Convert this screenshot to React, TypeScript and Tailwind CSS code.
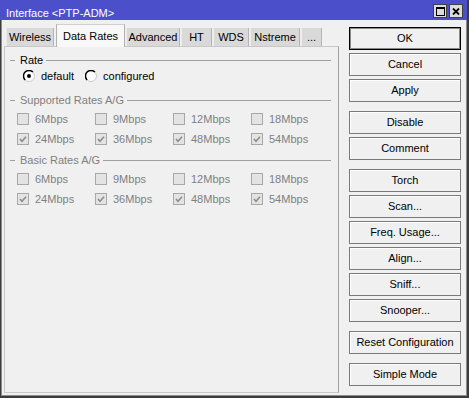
import React from "react"

// ***** INTERFACE WINDOW (DATA RATES TAB) *****

const tabs = [
    { name: "Wireless", w: "w-[48px]", ml: "ml-[2px]" },
    { name: "Data Rates", w: "w-[69px]", ml: "ml-[2px]", active: true },
    { name: "Advanced", w: "w-[54px]", ml: "ml-[1px]" },
    { name: "HT", w: "w-[31px]", ml: "ml-[1px]" },
    { name: "WDS", w: "w-[36px]", ml: "ml-[1px]" },
    { name: "Nstreme", w: "w-[50px]", ml: "ml-[1px]" },
    { name: "...", w: "w-[21px]", ml: "ml-[1px]" },
]

const rows = [
    [{ label: "6Mbps" }, { label: "9Mbps" }, { label: "12Mbps" }, { label: "18Mbps" }],
    [{ label: "24Mbps", checked: true }, { label: "36Mbps", checked: true }, { label: "48Mbps", checked: true }, { label: "54Mbps", checked: true }],
]

function Legend({ label, gray }: { label: string; gray?: boolean }) {
    return (
        <div className="flex h-[14px] items-center pr-[7px]">
            <div className="ml-[5px] h-px w-[5px] bg-[#a0a0a0]" />
            <span className={"ml-[5px] " + (gray ? "text-[#808080]" : "text-black")}>{label}</span>
            <div className="ml-[3px] h-px flex-1 bg-[#a0a0a0]" />
        </div>
    )
}

function Check({ label, checked }: { label: string; checked?: boolean }) {
    return (
        <div className="flex h-[20px] items-center">
            <div className="flex h-[12px] w-[12px] items-center justify-center border border-[#a8a8a8] bg-[#e3e3e3]">
                {checked && (
                    <svg width="10" height="10" viewBox="0 0 10 10">
                        <polyline points="2,5 4,7.2 8,2.8" fill="none" stroke="#8c8c8c" strokeWidth="1.6" />
                    </svg>
                )}
            </div>
            <span className="ml-[6px] text-[#808080]">{label}</span>
        </div>
    )
}

function Radio({ label, checked }: { label: string; checked?: boolean }) {
    return (
        <div className="flex items-center">
            <svg width="12" height="12" viewBox="0 0 12 12">
                <circle cx="6" cy="6" r="5.5" fill="#fff" stroke="#c8c8c8" />
                <path d="M2.1 9.9 A5.5 5.5 0 0 1 9.9 2.1" fill="none" stroke="#000" strokeWidth="1.4" />
                {checked && <circle cx="6" cy="6" r="2" fill="#000" />}
            </svg>
            <span className="ml-[6px] text-black">{label}</span>
        </div>
    )
}

function Btn({ label, primary, mt }: { label: string; primary?: boolean; mt: string }) {
    return (
        <div
            className={
                "flex h-[23px] items-center justify-center bg-[#f0f0f0] text-black " +
                mt +
                (primary
                    ? " border border-black shadow-[inset_0_0_0_1px_#8a8a8a]"
                    : " border border-[#7a7a7a] shadow-[inset_1px_1px_0_#ffffff]")
            }
        >
            {label}
        </div>
    )
}

export default function App() {
    return (
        <div className="flex h-[398px] w-[469px] flex-col bg-[#3c3c3c] font-['Liberation_Sans',Arial,sans-serif] text-[11px] leading-[13px]">
            {/* Title bar */}
            <div className="mr-[2px] flex h-[20px] justify-between bg-[#4b4fc9]">
                <p className="pl-[6px] pt-[7px] text-white">Interface &lt;PTP-ADM&gt;</p>
                <div className="flex gap-[2px] pr-[4px] pt-[4px]">
                    <div className="flex h-[14px] w-[14px] items-center justify-center border border-[#404040] bg-[#dcdcdc]">
                        <svg width="9" height="9" viewBox="0 0 9 9">
                            <rect x="0.5" y="0.5" width="8" height="8" fill="none" stroke="#000" />
                            <rect x="0" y="0" width="9" height="2" fill="#000" />
                        </svg>
                    </div>
                    <div className="flex h-[14px] w-[14px] items-center justify-center border border-[#404040] bg-[#dcdcdc]">
                        <svg width="8" height="7" viewBox="0 0 8 7">
                            <path d="M1 0.5 L7 6.5 M7 0.5 L1 6.5" stroke="#000" strokeWidth="1.8" />
                        </svg>
                    </div>
                </div>
            </div>

            {/* Body */}
            <div className="mb-[2px] ml-[1px] mr-[2px] flex flex-1 border-x border-b border-[#8c8c8c] bg-[#f0f0f0] pl-[2px]">
                {/* Tabs + panel */}
                <div className="flex w-[335px] flex-col pb-[2px] pt-[4px]">
                    <div className="flex h-[22px] items-end">
                        {tabs.map((t) =>
                            t.active ? (
                                <div
                                    key={t.name}
                                    className={"relative z-10 -mb-px h-[23px] border-x border-t border-x-[#b0b0b0] border-t-[#d0d0d0] bg-[#f8f8f8] pt-[5px] text-center text-black " + t.w + " " + t.ml}
                                >
                                    {t.name}
                                </div>
                            ) : (
                                <div
                                    key={t.name}
                                    className={"flex h-[18px] items-center justify-center border-l border-r border-l-[#ececec] border-r-[#b4b4b4] bg-[#d9d9d9] text-black " + t.w + " " + t.ml}
                                >
                                    {t.name}
                                </div>
                            )
                        )}
                    </div>

                    <div className="flex flex-1 flex-col border border-[#c8c8c8] border-r-[#a0a0a0] bg-[#f0f0f0]">
                        {/* Rate */}
                        <div className="mt-[6px]">
                            <Legend label="Rate" />
                        </div>
                        <div className="ml-[18px] mt-[2px] flex h-[14px] items-center">
                            <Radio label="default" checked />
                            <div className="ml-[11px]">
                                <Radio label="configured" />
                            </div>
                        </div>

                        {/* Supported Rates */}
                        <div className="mt-[10px]">
                            <Legend label="Supported Rates A/G" gray />
                        </div>
                        <div className="mt-[2px] grid grid-cols-[78px_78px_78px_78px] pl-[12px]">
                            {rows.flat().map((c) => (
                                <Check key={"s" + c.label} label={c.label} checked={"checked" in c} />
                            ))}
                        </div>

                        {/* Basic Rates */}
                        <div className="mt-[4px]">
                            <Legend label="Basic Rates A/G" gray />
                        </div>
                        <div className="mt-[2px] grid grid-cols-[78px_78px_78px_78px] pl-[12px]">
                            {rows.flat().map((c) => (
                                <Check key={"b" + c.label} label={c.label} checked={"checked" in c} />
                            ))}
                        </div>
                    </div>
                </div>

                {/* Buttons */}
                <div className="ml-[10px] flex w-[112px] flex-col pt-[7px]">
                    <Btn label="OK" primary mt="" />
                    <Btn label="Cancel" mt="mt-[3px]" />
                    <Btn label="Apply" mt="mt-[3px]" />
                    <Btn label="Disable" mt="mt-[9px]" />
                    <Btn label="Comment" mt="mt-[3px]" />
                    <Btn label="Torch" mt="mt-[9px]" />
                    <Btn label="Scan..." mt="mt-[3px]" />
                    <Btn label="Freq. Usage..." mt="mt-[3px]" />
                    <Btn label="Align..." mt="mt-[3px]" />
                    <Btn label="Sniff..." mt="mt-[3px]" />
                    <Btn label="Snooper..." mt="mt-[3px]" />
                    <Btn label="Reset Configuration" mt="mt-[9px]" />
                    <Btn label="Simple Mode" mt="mt-[9px]" />
                </div>
            </div>
        </div>
    )
}
